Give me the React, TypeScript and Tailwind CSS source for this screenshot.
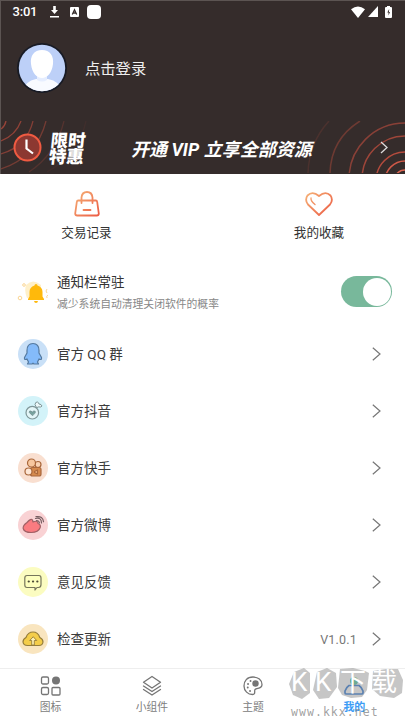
import type { ReactNode } from 'react';

function StatusBar() {
  return (
    <div className="flex h-[21px] items-center pl-[11.500px] pr-[13px] text-white">
      <span className="w-[25px] text-[13px] font-medium leading-none tracking-[-0.2px]">3:01</span>
      <svg className="ml-[12px]" width="9" height="12" viewBox="0 0 9 12" fill="#fff">
        <path d="M3.2 0h2.6v4H8L4.5 8 1 4h2.2zM0 10h9v1.5H0z" />
      </svg>
      <svg className="ml-[11px]" width="9" height="10" viewBox="0 0 9 10">
        <rect width="9" height="10" rx="1" fill="#fff" />
        <path d="M2.3 7.5 4.5 2.700l2.200 4.800M3 6h3" fill="none" stroke="#352c2b" strokeWidth="1.300" />
      </svg>
      <span className="ml-[8px] h-[14px] w-[14px] rounded-[4px] bg-white" />
      <svg className="ml-auto" width="14" height="12" viewBox="0 0 14 12" fill="#fff">
        <path d="M0 3.2Q7-2.4 14 3.2L7 12z" />
      </svg>
      <svg className="ml-[3px]" width="10" height="11" viewBox="0 0 10 11" fill="#fff">
        <path d="M10 0v11H0z" />
      </svg>
      <svg className="ml-[7px]" width="7" height="12" viewBox="0 0 7 12">
        <path d="M2 0h3v1h1q1 0 1 1v9q0 1-1 1H1q-1 0-1-1V2q0-1 1-1h1z" fill="#fff" />
        <path d="M4.2 3 2.3 6.5h1.2V9.5L5 6H3.9z" fill="#352c2b" />
      </svg>
    </div>
  );
}

function Avatar() {
  return (
    <svg width="50" height="50" viewBox="0 0 50 50">
      <defs>
        <clipPath id="face"><circle cx="25" cy="25" r="23.2" /></clipPath>
      </defs>
      <circle cx="25" cy="25" r="25" fill="#171a24" />
      <circle cx="25" cy="25" r="23.2" fill="#bdd0f8" />
      <g clipPath="url(#face)">
        <path d="M4 50Q8 38 19 36h12q12 2 15 14z" fill="#f8faff" />
        <path d="M20 31h10v6q-5 3-10 0z" fill="#e6eeff" />
        <path d="M25 7c-8 0-12 6-11 14 1 9 6 14 11 14s10-5 11-14C37 13 33 7 25 7z" fill="#fff" />
      </g>
    </svg>
  );
}

function Banner() {
  return (
    <div className="relative mt-[28px] flex h-[52px] items-center overflow-hidden text-white">
      <svg className="absolute inset-0" width="405" height="53" viewBox="0 0 405 53" fill="none" stroke="#c24f3f">
        <g strokeWidth="1.3">
          <path d="M0 8q4-3 5-8" opacity=".7" />
          <path d="M0 20Q15 14 20 0" opacity=".65" />
          <path d="M0 33Q26 25 32 0" opacity=".55" />
          <path d="M0 48Q36 36 45 0" opacity=".45" />
          <path d="M28 51Q55 33 63 0" opacity=".22" />
          <path d="M46 51Q78 33 85 0" opacity=".08" />
        </g>
        <g strokeWidth="1.500">
          <circle cx="404" cy="60" r="11" stroke="#dd6552" />
          <circle cx="404" cy="60" r="20" stroke="#cf5948" />
          <circle cx="404" cy="60" r="29" opacity=".9" />
          <circle cx="404" cy="58" r="43" opacity=".75" />
          <circle cx="404" cy="58" r="56" opacity=".6" />
          <path d="M329 52Q330 18 359 0" opacity=".4" />
          <path d="M307 52Q308 22 328 0" opacity=".16" />
        </g>
      </svg>
      <svg className="relative ml-[12px]" width="29" height="29" viewBox="0 0 29 29">
        <circle cx="14.500" cy="14.500" r="13" fill="#8c3831" stroke="#f05b42" strokeWidth="2" />
        <path d="M13.500 6.500v9l6.500 5" fill="none" stroke="#fff" strokeWidth="2.200" />
      </svg>
      <div className="relative ml-[8px] w-[40px] -skew-x-6 pt-[3px] text-[17.500px] font-black leading-[16px]">
        <div className="h-4">限时</div>
        <div className="h-4">特惠</div>
      </div>
      <div className="relative ml-[41px] whitespace-nowrap pt-[5px] text-[18px] font-bold italic leading-none">开通 VIP 立享全部资源</div>
      <svg className="relative ml-auto mr-[17px]" width="8" height="13" viewBox="0 0 8 13" fill="none" stroke="#ddd" strokeWidth="1.300">
        <path d="M1 1l6 5.500L1 12" />
      </svg>
    </div>
  );
}

function Chevron() {
  return (
    <svg width="9" height="14" viewBox="0 0 9 14" fill="none" stroke="#777" strokeWidth="1.200">
      <path d="M.8.8 8 7 .8 13.2" />
    </svg>
  );
}

function Row({ icon, label, extra }: { icon: ReactNode; label: string; extra?: string }) {
  return (
    <div className="flex h-[57px] items-center pl-[18px] pr-[24px]">
      {icon}
      <span className="ml-[9px] pt-[3px] text-[13.500px] leading-none text-[#3a3a3a]">{label}</span>
      <span className="ml-auto mr-[15px] pt-[3px] text-[12.500px] leading-none tracking-[0.2px] text-[#777]">{extra}</span>
      <Chevron />
    </div>
  );
}

function Disc({ fill, children }: { fill: string; children: ReactNode }) {
  return (
    <svg width="30" height="30" viewBox="0 0 30 30" fill="none" strokeLinecap="round" strokeLinejoin="round">
      <circle cx="15" cy="15" r="15" fill={fill} />
      {children}
    </svg>
  );
}

const rows = [
  {
    label: '官方 QQ 群',
    icon: (
      <Disc fill="#c9e0f7">
        <path d="M15 4.500c-4 0-6 3-6 7v2.500L6.500 18.500q-.5 3 2.500 1.500l1.500 3-1 2H14l1-.8 1 .8h4.500l-1-2 1.500-3q3 1.500 2.500-1.500L21 14v-2.500c0-4-2-7-6-7z" fill="#84bbfa" stroke="#54799f" strokeWidth="1.200" />
      </Disc>
    ),
  },
  {
    label: '官方抖音',
    icon: (
      <Disc fill="#d3f3f9">
        <circle cx="14.300" cy="16.700" r="6.300" fill="#e3f6f8" stroke="#7f9698" strokeWidth="1.200" />
        <path d="M18.500 11.500l-1.500-3q.5-3 2.500-2.500 1 .2 1.500 2 2.500.200 3 2-.5 1.500-3.500 1z" fill="#ecf8f9" stroke="#7f9698" strokeWidth="1" />
        <path d="M14.300 19.500l-3-3q-.3-2 1.500-1.500l1.500 1 1.500-1q2-.5 1.500 1.500z" fill="#77a39f" stroke="#718d8e" strokeWidth=".8" />
      </Disc>
    ),
  },
  {
    label: '官方快手',
    icon: (
      <Disc fill="#f9dfd0">
        <g stroke="#a9673b" strokeWidth="1.200">
          <circle cx="20" cy="11.500" r="3" fill="#f8d2b3" />
          <circle cx="13.500" cy="10" r="4" fill="#f7c79e" />
          <rect x="12.500" y="14.500" width="10.500" height="8.500" rx="2" fill="#d58a4e" />
          <circle cx="10.500" cy="18.500" r="3.500" fill="#fde6d5" />
          <path d="M16.500 18.500l3-1.500v4l-3-1.500z" fill="#f4b887" />
        </g>
      </Disc>
    ),
  },
  {
    label: '官方微博',
    icon: (
      <Disc fill="#f9d2d4">
        <path d="M9 12.500q4-4.500 5.500-2.500l.5 2q5-2 5 1.500 3 1 2.200 4-1.700 5-9 5-7 0-8-4-.5-3 3.800-6z" fill="#fa7b80" stroke="#a16065" strokeWidth="1.200" />
        <path d="M17.500 8.500q6-1.500 6 4.500M18 6.700q7-1 7.500 5M18.500 10.500q2.500 0 3 2.500" stroke="#765d60" strokeWidth="1.200" />
      </Disc>
    ),
  },
  {
    label: '意见反馈',
    icon: (
      <Disc fill="#fbfcc1">
        <path d="M9 8.500h12q2 0 2 2.500v6.500q0 3-2.500 3h-1.500L17 23v-2.500H9q-2.200 0-2.200-2.500v-7q0-2.500 2.200-2.500z" fill="#fdffbd" stroke="#76765b" strokeWidth="1.200" />
        <path d="M10.700 14.500h.1M15 14.500h.1M19.300 14.500h.1" stroke="#4c4b36" strokeWidth="2.200" />
      </Disc>
    ),
  },
  {
    label: '检查更新',
    extra: 'V1.0.1',
    icon: (
      <Disc fill="#f9e5bf">
        <path d="M9.500 21.500q-4 0-4.500-3.500 0-3 3-4.500Q10 8 15 8q5 0 6.800 5.500 3.200 1.500 3.200 4.500-.500 3.500-4 3.500z" fill="#f4cd4a" stroke="#957d3b" strokeWidth="1.200" />
        <path d="M15 13l-3.300 3.500h2V21h2.600v-4.500h2z" fill="#fff2b6" stroke="#957d3b" strokeWidth=".9" />
      </Disc>
    ),
  },
];

function Shortcut({ label, children }: { label: string; children: ReactNode }) {
  return (
    <div className="flex flex-1 flex-col items-center pt-[16px]">
      <svg width="28" height="28" viewBox="0 0 28 28" fill="none" stroke="url(#warm)" strokeWidth="1.800" strokeLinecap="round" strokeLinejoin="round">
        <defs>
          <linearGradient id="warm" gradientUnits="userSpaceOnUse" x1="3" y1="3" x2="25" y2="25">
            <stop stopColor="#f5ad74" />
            <stop offset="1" stopColor="#ec5e45" />
          </linearGradient>
        </defs>
        {children}
      </svg>
      <span className="mt-[7.500px] text-[12.600px] leading-[15px] text-[#333]">{label}</span>
    </div>
  );
}

function Tab({ label, active, children }: { label: string; active?: boolean; children: ReactNode }) {
  return (
    <div className="flex w-[101.300px] flex-col items-center pt-[6px]">
      <svg width="22" height="22" viewBox="0 0 22 22" fill="none" stroke="#757575" strokeWidth="1.300" strokeLinejoin="round" strokeLinecap="round">
        {children}
      </svg>
      <span className={active ? 'mt-[4px] text-[11px] font-bold leading-[14px] text-[#3d9cf5]' : 'mt-[4px] text-[10.800px] leading-[14px] text-[#808080]'}>{label}</span>
    </div>
  );
}

function Watermark() {
  return (
    <div className="pointer-events-none absolute left-[288px] top-[667px] h-[53px] w-[117px]">
      <svg className="absolute inset-0" width="117" height="53" viewBox="0 0 117 53" fill="#8d8d8d" fillOpacity=".5">
        <path d="M6 5l10-4 6 5v20l-8 6-9-4-4-11z" />
        <path d="M29 5l10-4 9 5 1 14-8 11-10 1-6-9z" />
        <path d="M52 2l13-1 12 3 4 2-2 17-5 7-11 1-9-3-4-7z" />
        <path d="M85 4l13-2 12 0 5 11-1 13-8 5-14-2-8-7z" />
      </svg>
      <div className="relative flex pl-[3px] pt-[3px] text-[26px] leading-[24px] text-white">
        <span className="w-[24px]">K</span>
        <span className="w-[25px]">K</span>
        <span className="w-[31px]">下</span>
        <span>载</span>
      </div>
      <div className="relative mt-[11px] pl-[3px] font-['DejaVu_Sans_Mono'] text-[11.500px] leading-[14px] tracking-[1.050px] text-[#888]/80">www.kkx.net</div>
    </div>
  );
}

export default function App() {
  return (
    <div className="relative flex h-[720px] w-[405px] flex-col overflow-hidden bg-white font-[Roboto,'Noto_Sans_CJK_SC',sans-serif]">
      <header className="h-[173.500px] shrink-0 border-t border-l border-[#5c5452] bg-[#352c2b]">
        <StatusBar />
        <div className="mt-[21px] flex h-[50px] items-center pl-[16px]">
          <Avatar />
          <span className="ml-[18px] pt-[4px] text-[15.300px] leading-none text-[#eee]">点击登录</span>
        </div>
        <Banner />
      </header>
      <section className="flex h-[88px] shrink-0">
        <div className="flex w-[173px]">
          <Shortcut label="交易记录">
            <path d="M5.200 10.500h17.600q1.200 0 1.400 1.500l1.600 11.500q0 2-2 2H4.200q-2 0-2-2L3.800 12q.2-1.500 1.400-1.500z" />
            <path d="M8.500 13V7.500Q9 2 14 2t5.500 5.500V13M10.500 20h7" />
          </Shortcut>
        </div>
        <div className="ml-auto flex w-[172px]">
          <Shortcut label="我的收藏">
            <path d="M14 25 3 14.500Q-.5 10 2.500 5.500q5-5 11.500.5 6.500-5.500 11.500-.5 3 4.500-.5 9z" />
            <path d="M6 8q-.5 3 4 6.500" strokeWidth="1.300" />
          </Shortcut>
        </div>
      </section>
      <main className="flex flex-1 flex-col">
        <div className="flex h-[63.500px] shrink-0 items-center pl-[17px] pr-[13px]">
          <svg className="mt-[-2px]" width="32" height="24" viewBox="0 0 32 24" fill="none">
            <path d="M9 5q7-7 15 0v13H10q-3-7-1-13z" fill="#fff0c9" />
            <g stroke="#fbd694" strokeWidth="1">
              <circle cx="7" cy="5" r="1.300" />
              <circle cx="3" cy="18" r="1.800" />
              <path d="M30 9q-2 2 0 4M31 15q-2 1-1 3" />
            </g>
            <path d="M19 4q1.500 0 1.500 1.500 5 1.500 5 6.500v4.500l1.500 2.500v1H11v-1l1.500-2.500V12q0-5 5-6.500Q17.500 4 19 4zM17 21h4q-.3 2-2 2t-2-2z" fill="#ffb90b" />
          </svg>
          <div className="ml-[8px]">
            <div className="mt-[-1px] text-[13.500px] leading-[18px] text-[#333]">通知栏常驻</div>
            <div className="mt-[7px] text-[10.800px] leading-[14px] text-[#888]">减少系统自动清理关闭软件的概率</div>
          </div>
          <div className="mt-[-3px] ml-auto flex h-[31px] w-[51px] justify-end rounded-full bg-[#78b89b] p-[1.500px]">
            <span className="h-7 w-7 rounded-full bg-white" />
          </div>
        </div>
        {rows.map((row) => <Row key={row.label} {...row} />)}
      </main>
      <nav className="flex h-[52px] shrink-0 border-t border-[#eee] bg-white">
        <Tab label="图标">
          <rect x="1.500" y="2" width="7" height="7" rx="1.500" />
          <rect x="1.500" y="12.500" width="7" height="7" rx="1.500" />
          <rect x="12" y="12.500" width="8" height="7.500" rx="1" />
          <circle cx="16" cy="5.500" r="4" fill="#757575" stroke="none" />
        </Tab>
        <Tab label="小组件">
          <path d="M11 1.500l8.500 5.800L11 13 2.500 7.300z" />
          <path d="M2.500 11l8.500 5.500 8.500-5.500M2.500 14.500 11 20l8.500-5.500" />
        </Tab>
        <Tab label="主题">
          <path d="M11 2C5 2 2 6 2 11s4 8.500 8.500 8.500c3.500 0 1.500-3.500 2.500-5 1.500-2 7 0 7-5C20 5 16 2 11 2z" />
          <circle cx="13.500" cy="8.500" r="3.200" fill="#757575" stroke="none" />
          <path d="M8.500 6h.1M6 9h.1M5.700 12.500h.1M8 16h.1" strokeWidth="1.800" />
        </Tab>
        <Tab label="我的" active>
          <path d="M6 10.500q-3 2-4 5.500v2q0 1 1.500 1h15q1.500 0 1.500-1v-2q-1-3.500-4-5.500z" stroke="#2874d5" strokeWidth="1.700" />
          <circle cx="11" cy="6" r="4" fill="#49c69a" stroke="none" />
        </Tab>
      </nav>
      <Watermark />
    </div>
  );
}
